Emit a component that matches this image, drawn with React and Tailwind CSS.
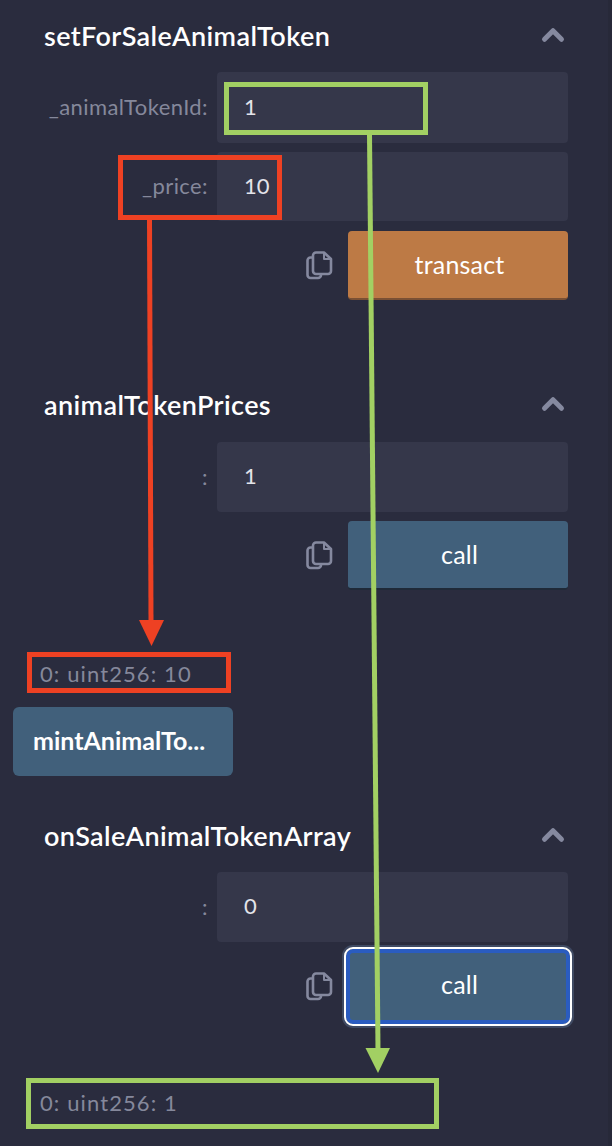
import { ChevronUp } from 'lucide-react';

function CopyIcon() {
    return (
        <svg width="28" height="30" viewBox="0 0 28 30" fill="none" stroke="#85899f" strokeWidth="2.6" strokeLinejoin="round" className="mr-[15px] shrink-0">
            <path d="M8 6.5H5.5A3 3 0 0 0 2.5 9.5V24A3 3 0 0 0 5.500 27H13A3 3 0 0 0 16 24" />
            <path d="M11 1.500H19L26 8V20A3 3 0 0 1 23 23H11A3 3 0 0 1 8 20V4.500A3 3 0 0 1 11 1.500Z" fill="#2a2c3e" />
            <path d="M19 1.500V8H26" strokeWidth="2" />
        </svg>
    );
}

function Title({ children }) {
    return (
        <div className="flex items-center justify-between pl-[44px] pr-[44px] h-[36px]">
            <h3 className="text-[27px] font-semibold text-white tracking-[0.4px] pb-[2px]">{children}</h3>
            <ChevronUp className="w-[34px] h-[34px] -mr-[2px] -mt-[4px] text-[#85899f]" strokeWidth={3.5} />
        </div>
    );
}

function Field({ label, value, className }) {
    return (
        <div className={`flex items-center pr-[44px] ${className}`}>
            <span className="w-[208px] text-right text-[22px] text-[#85889b] shrink-0 tracking-[0.4px] pb-[2px]">{label}</span>
            <div className="ml-[9px] flex-1 h-full bg-[#35374a] rounded-[4px] flex items-center pl-[27px] pb-[3px] text-[22px] text-[#e3e4ea]">
                {value}
            </div>
        </div>
    );
}

function ActionRow({ label, color, className }) {
    return (
        <div className={`flex items-center justify-end pr-[44px] ${className}`}>
            <CopyIcon />
            <button className={`w-[220px] h-[69px] pl-[3px] rounded-[4px] text-[25px] text-white border-b-2 tracking-[0.2px] ${color}`}>
                {label}
            </button>
        </div>
    );
}

function Output({ children }) {
    return <div className="pl-[40px] text-[22px] h-[30px] leading-[30px] text-[#85889b] tracking-[1.1px]">{children}</div>;
}

// the hand-drawn arrows and boxes that lie over the panel
function Annotations() {
    return (
        <svg width="612" height="1146" viewBox="0 0 612 1146" fill="none" className="absolute inset-0 pointer-events-none">
            <g stroke="#ee4123" strokeWidth="5">
                <rect x="120.500" y="157.500" width="159" height="60" />
                <rect x="29.500" y="654.500" width="199" height="36" />
                <path d="M149.500 219L151 622" />
            </g>
            <path d="M139 620H164L151.500 646Z" fill="#ee4123" />
            <g stroke="#a2d063" strokeWidth="5">
                <rect x="226.500" y="84.500" width="199" height="48" />
                <rect x="28.500" y="1080.500" width="408" height="46" />
                <path d="M369.500 134L378 1050" />
            </g>
            <path d="M365.500 1048H390L378 1073Z" fill="#a2d063" />
        </svg>
    );
}

export default function App() {
    return (
        <div className="relative w-[612px] h-[1146px] overflow-hidden bg-[#2a2c3e] font-['Lato','Noto_Sans',sans-serif]">
            <div className="pt-[19px]">
                <Title>setForSaleAnimalToken</Title>
                <Field label="_animalTokenId:" value="1" className="mt-[17px] h-[71px]" />
                <Field label="_price:" value="10" className="mt-[9px] h-[69px]" />
                <ActionRow label="transact" color="bg-[#bd7a45] border-[#7a5034]" className="mt-[10px]" />

                <div className="mt-[88px]">
                    <Title>animalTokenPrices</Title>
                    <Field label=":" value="1" className="mt-[18px] h-[70px]" />
                    <ActionRow label="call" color="bg-[#41607b] border-[#1f2a38]" className="mt-[9px]" />
                </div>

                <div className="mt-[69px]">
                    <Output>0: uint256: 10</Output>
                </div>

                <button className="block mt-[18px] ml-[13px] w-[220px] h-[69px] pl-[20px] pb-[2px] text-left rounded-[6px] bg-[#41607b] text-[25px] font-bold text-white">
                    mintAnimalTo...
                </button>

                <div className="mt-[43px]">
                    <Title>onSaleAnimalTokenArray</Title>
                    <Field label=":" value="0" className="mt-[17px] h-[70px]" />
                    <div className="flex items-center justify-end pr-[44px] mt-[9px]">
                        <CopyIcon />
                        <button className="-my-[2px] -mr-[2px] ml-[-2px] w-[224px] h-[75px] pl-[3px] pb-[3px] rounded-[7px] bg-[#41607b] text-[25px] tracking-[0.2px] text-white border-[4px] border-[#2a5cc0] outline-2 outline-white shadow-[0_0_0_4px_#3f4a63]">
                            call
                        </button>
                    </div>
                </div>

                <div className="mt-[66px]">
                    <Output>0: uint256: 1</Output>
                </div>
            </div>
            <div className="absolute inset-y-0 right-0 w-[4px] bg-[#272939]" />
            <Annotations />
        </div>
    );
}
